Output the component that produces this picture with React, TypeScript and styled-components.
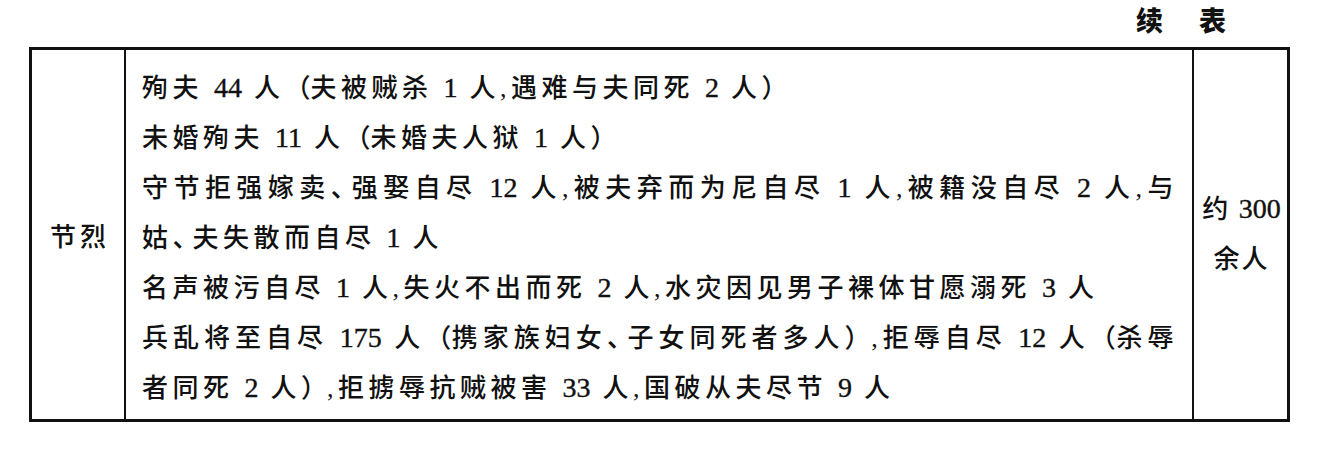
import styled, { createGlobalStyle } from 'styled-components';

const GlobalStyle = createGlobalStyle`
  body {
    margin: 0;
    background: #ffffff;
    color: #111111;
    font-family: "Liberation Serif", "Noto Sans CJK SC", serif;
  }
`;

// 每一行按原表排版断开
const rows = [
  { text: '殉夫 44 人（夫被贼杀 1 人,遇难与夫同死 2 人）' },
  { text: '未婚殉夫 11 人（未婚夫人狱 1 人）' },
  { text: '守节拒强嫁卖、强娶自尽 12 人,被夫弃而为尼自尽 1 人,被籍没自尽 2 人,与', justify: true },
  { text: '姑、夫失散而自尽 1 人' },
  { text: '名声被污自尽 1 人,失火不出而死 2 人,水灾因见男子裸体甘愿溺死 3 人' },
  { text: '兵乱将至自尽 175 人（携家族妇女、子女同死者多人）,拒辱自尽 12 人（杀辱', justify: true },
  { text: '者同死 2 人）,拒掳辱抗贼被害 33 人,国破从夫尽节 9 人' },
];

// 数字用西文字体,括号和顿号压缩
function typeset(text: string) {
  return text.split(/(\d+|[（）、])/).map((part, i) => {
    if (i % 2 === 0) return part;
    if (/\d/.test(part)) return <Num key={i}>{part}</Num>;
    return (
      <Punct key={i} $ls={part === '、' ? -6 : 0}>
        {part}
      </Punct>
    );
  });
}

function App() {
  return (
    <Page lang="zh-CN">
      <GlobalStyle />
      <Caption>
        <span>续</span>
        <span>表</span>
      </Caption>
      <Table>
        <LabelCell>节烈</LabelCell>
        <TextCell>
          {rows.map((row, i) => (
            <Line key={i} $justify={row.justify}>
              {typeset(row.text)}
            </Line>
          ))}
        </TextCell>
        <TotalCell>
          <TotalLine>约 {typeset('300')}</TotalLine>
          <TotalLine>余人</TotalLine>
        </TotalCell>
      </Table>
    </Page>
  );
}

export default App;

const Page = styled.div`
  width: 1333px;
  height: 459px;
  overflow: hidden;
`;

const Caption = styled.div`
  display: flex;
  justify-content: flex-end;
  align-items: flex-start;
  gap: 36px;
  height: 47px;
  padding-right: 107px;
  box-sizing: border-box;
  font-family: "Noto Sans CJK SC", sans-serif;
  font-weight: 900;
  font-size: 27px;
  line-height: normal;
  color: #111;
`;

const Table = styled.div`
  display: grid;
  grid-template-columns: 92px 1068px 95px;
  width: 1261px;
  margin-left: 29px;
  border: 3px solid #111;
  box-sizing: border-box;
  font-size: 26px;
  font-weight: 500;
  letter-spacing: 4.5px;
`;

const LabelCell = styled.div`
  display: flex;
  align-items: center;
  justify-content: center;
  padding-left: 4px;
  letter-spacing: 4px;
`;

const TextCell = styled.div`
  border-left: 2px solid #111;
  padding: 13px 14px 6px 16px;
`;

const Line = styled.div<{ $justify?: boolean }>`
  height: 50px;
  line-height: 50px;
  text-align: ${(p) => (p.$justify ? 'justify' : 'left')};
  text-align-last: ${(p) => (p.$justify ? 'justify' : 'auto')};
`;

const Num = styled.span`
  font-family: "Liberation Serif", serif;
  font-size: 28px;
  font-weight: 400;
  letter-spacing: 0;
  margin-right: 1px;
  -webkit-text-stroke: 0.4px currentColor;
`;

const Punct = styled.span<{ $ls: number }>`
  letter-spacing: ${(p) => p.$ls}px;
`;

const TotalCell = styled.div`
  border-left: 2px solid #111;
  display: flex;
  flex-direction: column;
  justify-content: center;
  align-items: center;
  padding-left: 2px;
`;

const TotalLine = styled.div`
  line-height: 50px;
  white-space: nowrap;
  letter-spacing: 2px;

  ${Num} {
    margin: 0;
  }
`;
